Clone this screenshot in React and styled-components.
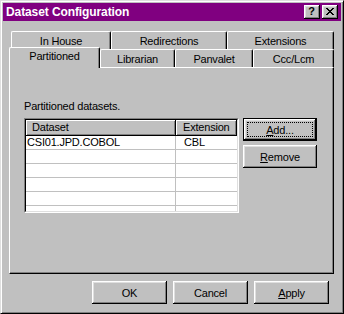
import React from "react";
import styled, { createGlobalStyle } from "styled-components";

const Global = createGlobalStyle`
  html, body { margin: 0; padding: 0; background: #c0c0c0; }
  * { box-sizing: border-box; }
`;

const FONT = `"Liberation Sans", Arial, sans-serif`;

const Window = styled.div`
  width: 344px;
  height: 314px;
  background: #c0c0c0;
  border: 1px solid;
  border-color: #dfdfdf #000 #000 #dfdfdf;
  box-shadow: inset 1px 1px #fff, inset -1px -1px #808080;
  padding: 2px;
  display: flex;
  flex-direction: column;
  font-family: ${FONT};
  font-size: 11px;
  letter-spacing: -0.2px;
  color: #000;
`;

const TitleBar = styled.div`
  height: 18px;
  background: #800080;
  display: flex;
  align-items: center;
  padding: 0 3px 0 3px;
  color: #fff;
  font-weight: bold;
  font-size: 12px;
  letter-spacing: -0.1px;
`;

const TitleText = styled.div`
  flex: 1;
  white-space: nowrap;
`;

const TitleButtons = styled.div`
  display: flex;
  gap: 2px;
`;

const CapButton = styled.div`
  width: 16px;
  height: 14px;
  background: #c0c0c0;
  box-shadow: inset -1px -1px #000, inset 1px 1px #fff, inset -2px -2px #808080,
    inset 2px 2px #dfdfdf;
  display: flex;
  align-items: center;
  justify-content: center;
  color: #000;
  font-weight: bold;
  font-size: 11px;
  line-height: 1;
  padding-bottom: 1px;
  padding-right: 1px;
`;

const Body = styled.div`
  flex: 1;
  padding: 10px 7px 0 6px;
  display: flex;
  flex-direction: column;
`;

const TabRow = styled.div`
  display: flex;
  height: 18px;
  padding-left: 2px;
  align-items: flex-start;
`;

const Tab = styled.div`
  width: ${(p) => p.$w}px;
  height: ${(p) => (p.$active ? 21 : 18)}px;
  margin-top: ${(p) => (p.$active ? -2 : 0)}px;
  margin-left: ${(p) => (p.$active ? -2 : 0)}px;
  position: relative;
  z-index: ${(p) => (p.$active ? 2 : 0)};
  background: #c0c0c0;
  border-top: 1px solid #fff;
  border-left: 1px solid #fff;
  border-right: 1px solid #000;
  border-radius: 2px 2px 0 0;
  box-shadow: inset -1px 0 #808080;
  display: flex;
  justify-content: center;
  align-items: ${(p) => (p.$active ? "flex-start" : "center")};
  padding-top: ${(p) => (p.$active ? 2 : 0)}px;
  white-space: nowrap;
`;

const Panel = styled.div`
  height: 207px;
  background: #c0c0c0;
  border-top: 1px solid #fff;
  border-left: 1px solid #fff;
  border-right: 1px solid #000;
  border-bottom: 1px solid #000;
  box-shadow: inset -1px -1px #808080;
  padding: 32px 0 0 14px;
  position: relative;
  z-index: 1;
`;

const Label = styled.div`
  line-height: 13px;
  height: 13px;
`;

const ContentRow = styled.div`
  display: flex;
  gap: 4px;
  margin-top: 5px;
`;

const ListOuter = styled.div`
  width: 215px;
  height: 95px;
  border: 1px solid;
  border-color: #808080 #fff #fff #808080;
`;

const ListInner = styled.div`
  width: 100%;
  height: 100%;
  border: 1px solid;
  border-color: #000 #dfdfdf #dfdfdf #000;
  background: #fff;
  overflow: hidden;
`;

const Grid = styled.div`
  display: grid;
  grid-template-columns: 150px 61px;
`;

const HeaderCell = styled.div`
  height: 16px;
  background: #c0c0c0;
  box-shadow: inset -1px -1px #000, inset 1px 1px #fff, inset -2px -2px #808080;
  padding-left: ${(p) => p.$pad}px;
  line-height: 15px;
  white-space: nowrap;
`;

const Cell = styled.div`
  height: 14px;
  border-bottom: 1px solid #c0c0c0;
  border-right: ${(p) => (p.$sep ? "1px solid #c0c0c0" : "none")};
  padding-left: ${(p) => p.$pad}px;
  line-height: 13px;
  white-space: nowrap;
`;

const SideButtons = styled.div`
  display: flex;
  flex-direction: column;
  gap: 4px;
`;

const Button = styled.div`
  width: ${(p) => p.$w}px;
  height: 23px;
  background: #c0c0c0;
  border: ${(p) => (p.$default ? "1px solid #000" : "none")};
  box-shadow: inset -1px -1px #000, inset 1px 1px #fff, inset -2px -2px #808080,
    inset 2px 2px #dfdfdf;
  display: flex;
  align-items: center;
  justify-content: center;
  position: relative;
  white-space: nowrap;
`;

const DefaultFrame = styled.div`
  width: 100%;
  height: 100%;
  box-shadow: inset -1px -1px #000, inset 1px 1px #fff, inset -2px -2px #808080,
    inset 2px 2px #dfdfdf;
  padding: 3px;
`;

const Focus = styled.div`
  width: 100%;
  height: 100%;
  border: 1px dotted #000;
  display: flex;
  align-items: center;
  justify-content: center;
`;

const Footer = styled.div`
  display: flex;
  justify-content: flex-end;
  gap: 6px;
  margin-top: 7px;
  padding-right: 5px;
`;

const U = styled.span`
  text-decoration: underline;
  text-underline-offset: 1px;
`;

const CloseGlyph = () => (
  <svg width="8" height="7" viewBox="0 0 8 7" shapeRendering="crispEdges">
    <path
      fill="#000"
      d="M0 0h2v1H0zM6 0h2v1H6zM1 1h2v1H1zM5 1h2v1H5zM2 2h4v1H2zM3 3h2v1H3zM2 4h4v1H2zM1 5h2v1H1zM5 5h2v1H5zM0 6h2v1H0zM6 6h2v1H6z"
    />
  </svg>
);

const backTabs = [
  { label: "In House", w: 100 },
  { label: "Redirections", w: 116 },
  { label: "Extensions", w: 107 },
];

const frontTabs = [
  { label: "Partitioned", w: 91, active: true },
  { label: "Librarian", w: 75 },
  { label: "Panvalet", w: 78 },
  { label: "Ccc/Lcm", w: 81 },
];

const rows = [
  ["CSI01.JPD.COBOL", "CBL"],
  ["", ""],
  ["", ""],
  ["", ""],
  ["", ""],
  ["", ""],
];

export default function App() {
  return (
    <>
      <Global />
      <Window>
        <TitleBar>
          <TitleText>Dataset Configuration</TitleText>
          <TitleButtons>
            <CapButton>?</CapButton>
            <CapButton>
              <CloseGlyph />
            </CapButton>
          </TitleButtons>
        </TitleBar>
        <Body>
          <TabRow>
            {backTabs.map((t) => (
              <Tab key={t.label} $w={t.w}>
                {t.label}
              </Tab>
            ))}
          </TabRow>
          <TabRow>
            {frontTabs.map((t) => (
              <Tab key={t.label} $w={t.w} $active={t.active}>
                {t.label}
              </Tab>
            ))}
          </TabRow>
          <Panel>
            <Label>Partitioned datasets.</Label>
            <ContentRow>
              <ListOuter>
                <ListInner>
                  <Grid>
                    <HeaderCell $pad={6}>Dataset</HeaderCell>
                    <HeaderCell $pad={7}>Extension</HeaderCell>
                    {rows.map((r, i) => (
                      <React.Fragment key={i}>
                        <Cell $sep $pad={1}>
                          {r[0]}
                        </Cell>
                        <Cell $pad={8}>{r[1]}</Cell>
                      </React.Fragment>
                    ))}
                  </Grid>
                </ListInner>
              </ListOuter>
              <SideButtons>
                <Button $w={74} $default style={{ boxShadow: "none" }}>
                  <DefaultFrame>
                    <Focus>
                      <U>A</U>dd...
                    </Focus>
                  </DefaultFrame>
                </Button>
                <Button $w={74}>
                  <span>
                    <U>R</U>emove
                  </span>
                </Button>
              </SideButtons>
            </ContentRow>
          </Panel>
          <Footer>
            <Button $w={75}>OK</Button>
            <Button $w={75}>Cancel</Button>
            <Button $w={75}>
              <span>
                <U>A</U>pply
              </span>
            </Button>
          </Footer>
        </Body>
      </Window>
    </>
  );
}
